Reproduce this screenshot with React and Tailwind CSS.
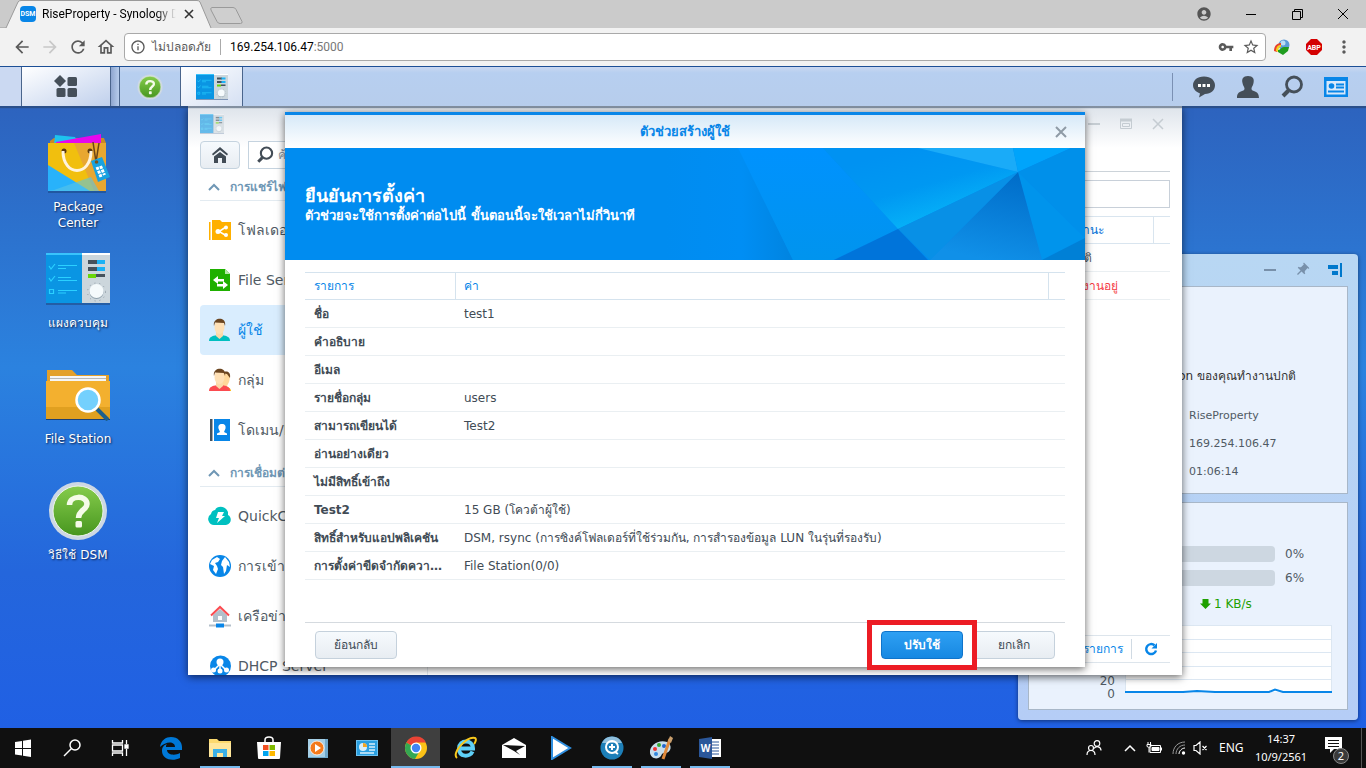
import React from 'react';
import {
  MdArrowBack, MdArrowForward, MdRefresh, MdOutlineHome, MdInfoOutline, MdVpnKey,
  MdStarBorder, MdMoreVert, MdAccountCircle, MdPushPin,
} from 'react-icons/md';

const wizardRows = [
  { name: 'ชื่อ', value: 'test1' },
  { name: 'คำอธิบาย', value: '' },
  { name: 'อีเมล', value: '' },
  { name: 'รายชื่อกลุ่ม', value: 'users' },
  { name: 'สามารถเขียนได้', value: 'Test2' },
  { name: 'อ่านอย่างเดียว', value: '' },
  { name: 'ไม่มีสิทธิ์เข้าถึง', value: '' },
  { name: 'Test2', value: '15 GB (โควต้าผู้ใช้)' },
  { name: 'สิทธิ์สำหรับแอปพลิเคชัน', value: 'DSM, rsync (การซิงค์โฟลเดอร์ที่ใช้ร่วมกัน, การสำรองข้อมูล LUN ในรุ่นที่รองรับ)' },
  { name: 'การตั้งค่าขีดจำกัดความเร็ว', value: 'File Station(0/0)' },
];

/* ---------- DSM icons ---------- */

const ControlPanelIcon = ({ className }) => (
  <svg className={className} viewBox="0 0 64 52" aria-hidden="true">
    <rect width="64" height="51" y="1" fill="#1b3f73" opacity=".5" />
    <rect width="36" height="50" fill="#0a95e3" />
    <rect width="36" height="2" fill="#39c3fb" />
    <rect x="36" width="28" height="50" fill="#ccd6dc" />
    <rect x="36" width="28" height="2" fill="#fff" />
    <g fill="none" stroke="#2ad0ff" strokeWidth="1.2">
      <path d="M3 13l2 3 4-5M12 12.500h19M12 15.500h8M3 25l2 3 4-5M12 24.500h13M12 27.500h19M3.500 36.500h4v4h-4zM12 37.500h19M12 40h8" />
    </g>
    <rect x="42" y="7" width="10" height="4" fill="#46525c" />
    <rect x="51" y="7" width="8" height="4" fill="#1bb2f5" />
    <rect x="42" y="14" width="10" height="4" fill="#46525c" />
    <rect x="51" y="14" width="8" height="4" fill="#1bb2f5" />
    <rect x="50" y="21" width="9" height="3" fill="#46525c" />
    <rect x="42" y="21" width="8" height="4" fill="#6ad60a" />
    <circle cx="50.500" cy="39" r="9" fill="none" stroke="#8e9ba5" strokeDasharray="1 4" />
    <circle cx="50.500" cy="39" r="7" fill="#8fa0ac" />
    <circle cx="50.500" cy="38" r="7" fill="#f5fafc" />
  </svg>
);

const HelpIcon = ({ className }) => (
  <svg className={className} viewBox="0 0 60 60" aria-hidden="true">
    <defs>
      <linearGradient id="help" x2="0" y2="1">
        <stop stopColor="#86cc4c" />
        <stop offset="1" stopColor="#47961f" />
      </linearGradient>
    </defs>
    <circle cx="30" cy="30" r="29" fill="#cdd8e4" />
    <circle cx="30" cy="30" r="25" fill="url(#help)" stroke="#eef5ea" strokeWidth="1" />
    <path d="M21.500 24c0-10 17.500-10 17.500-1 0 6-8.500 6-8.500 14" fill="none" stroke="#f5fbe9" strokeWidth="5.500" />
    <rect x="27.500" y="40" width="6.500" height="6.500" rx="1.500" fill="#f5fbe9" />
  </svg>
);

const PackageIcon = ({ className }) => (
  <svg className={className} viewBox="0 0 64 64" aria-hidden="true">
    <path d="M4 10l4-3h50l2 5v6H4z" fill="#c98a25" />
    <path d="M9 4l20 2 4 8H8z" fill="#1ec3ee" />
    <path d="M10 11L55 3v12H10z" fill="#e607ee" />
    <path d="M2 12h58v48H2z" fill="#f1bf0e" />
    <path d="M28 12h32v48H48z" fill="#e8a731" />
    <path d="M2 34l42 26H2z" fill="#28b2fb" />
    <path d="M8 59l37-13 8 14H2z" fill="#59c4e8" opacity=".6" />
    <path d="M2 61h58" stroke="#174278" />
    <circle cx="18" cy="20" r="2.500" fill="#5b3a10" />
    <circle cx="44" cy="20" r="2.500" fill="#5b3a10" />
    <path d="M17 20c0 26 28 26 28 0" fill="none" stroke="#fff3dc" strokeWidth="3" />
    <path d="M47 11l3 20M53 12l-3 19" stroke="#6b4416" strokeWidth="1.500" fill="none" />
    <path d="M45 30l11-4 8 20-12 5z" fill="#18a2e0" />
    <circle cx="50.500" cy="31" r="1.800" fill="#7d521c" />
    <path d="M51 36l4 10M54.500 35l4 9" stroke="#fff" strokeWidth="3" strokeDasharray="3 1" />
  </svg>
);

const FileStationIcon = ({ className }) => (
  <svg className={className} viewBox="0 0 64 52" aria-hidden="true">
    <path d="M1 14V1h25l5 5h32v10z" fill="#e3a02a" />
    <path d="M4 7h56v7H4z" fill="#f5f5f5" />
    <path d="M4 9.500h56" stroke="#b8b8b8" />
    <path d="M0 12h64v38H0z" fill="#f3b02f" />
    <path d="M0 38h64v12H0z" fill="#e0a020" />
    <path d="M0 50.500h64" stroke="#1b3f73" />
    <path d="M51 40l11 11" stroke="#1d5f8c" strokeWidth="4" />
    <circle cx="42" cy="31" r="11.500" fill="#74d0fd" stroke="#fff" strokeWidth="2.500" />
  </svg>
);

const SearchGlyph = ({ className }) => (
  <svg className={className} viewBox="0 0 24 24" fill="none" stroke="currentColor" aria-hidden="true">
    <circle cx="14" cy="9.500" r="7.500" strokeWidth="2.800" />
    <path d="M8.500 15.500L3 21" strokeWidth="4" />
  </svg>
);

const PersonIcon = ({ shirt, group }) => (
  <svg className="h-6 w-6" viewBox="0 0 24 24" aria-hidden="true">
    {group && <path d="M14 5c8-4 9 4 7 9l-2 4 4 5h-8z" fill="#ffd89a" />}
    {group && <path d="M14 5c5-3 9-1 8 5l-3-4z" fill="#6b4520" />}
    {group && <path d="M17 23c0-4 5-5 6 0z" fill="#fdb400" />}
    <path d="M1 23c0-4 3-5 8-6h5c5 1 8 2 8 6z" fill={shirt} />
    <path d="M8 13h7v5l-3.500 3L8 18z" fill="#fbd9a8" />
    <ellipse cx="11.500" cy="9" rx="5" ry="7" fill="#ffe0b5" />
    <path d="M6 8C4-1 19-2 17 8l-1-3-9-.500z" fill="#6b4520" />
  </svg>
);

const sidebarGroups = [
  {
    title: 'การแชร์ไฟล์',
    items: [
      {
        label: 'โฟลเดอร์ที่ใช้ร่วมกัน',
        icon: (
          <svg className="h-6 w-6" viewBox="0 0 24 24" aria-hidden="true">
            <path d="M1 4h1.500v18H1zM4 2h8l2 2h9v18H4z" fill="#ffb000" />
            <path d="M18 9l-7 4.500 7 4" stroke="#fff" strokeWidth="1.500" fill="none" />
            <circle cx="10" cy="13.500" r="2.500" fill="#fff" />
            <circle cx="18" cy="9.500" r="2" fill="#fff" />
            <circle cx="18" cy="17" r="2" fill="#fff" />
          </svg>
        ),
      },
      {
        label: 'File Services',
        icon: (
          <svg className="h-6 w-6" viewBox="0 0 24 24" aria-hidden="true">
            <path d="M2 1h15l5 5v17H2z" fill="#1fb000" />
            <path d="M17 1v5h5z" fill="#b5e8a8" />
            <path d="M5 12l5-4v3h6v2.500h-6V16zM20 17l-5-4v3H9v2.500h6V21z" fill="#fff" />
          </svg>
        ),
      },
      { label: 'ผู้ใช้', active: true, icon: <PersonIcon shirt="#00bfc0" /> },
      { label: 'กลุ่ม', icon: <PersonIcon shirt="#fb4b50" group /> },
      {
        label: 'โดเมน/LDAP',
        icon: (
          <svg className="h-6 w-6" viewBox="0 0 24 24" aria-hidden="true">
            <path d="M2 1h2.500v22H2z" fill="#46525c" />
            <path d="M6 1h16v22H6z" fill="#0886e8" />
            <path d="M14 6c3 0 4 2 3.500 4.500L16 14l3 1.500V17H9v-1.500l3-1.500-1.500-3.500C10 8 11 6 14 6z" fill="#fff" />
          </svg>
        ),
      },
    ],
  },
  {
    title: 'การเชื่อมต่อ',
    items: [
      {
        label: 'QuickConnect',
        icon: (
          <svg className="h-6 w-6" viewBox="0 0 24 24" aria-hidden="true">
            <path d="M7 21a6 6 0 0 1-4-11 5 5 0 0 1 4-4C9 2 17 1 20 8v3c4 2 4 9-2 10z" fill="#00c0c0" />
            <path d="M10 8h6l-2 4h3l-8 7 2-5H8z" fill="#fff" />
          </svg>
        ),
      },
      {
        label: 'การเข้าถึงจากภายนอก',
        icon: (
          <svg className="h-6 w-6" viewBox="0 0 24 24" aria-hidden="true">
            <circle cx="12" cy="12" r="11" fill="#0886e8" />
            <path d="M4 6l5-3 3 2-2 3-3 1 2 3 1 3-2 5-3-4 1-4-4-2zM14 7l3-4 4 5 1 5-3-2-1 6-2 3-1-7-2-2z" fill="#fff" />
          </svg>
        ),
      },
      {
        label: 'เครือข่าย',
        icon: (
          <svg className="h-6 w-6" viewBox="0 0 24 24" aria-hidden="true">
            <path d="M5 11l7-6 7 6v7H5z" fill="#b2bfca" />
            <path d="M10 12h4v4h-4z" fill="#fff" />
            <path d="M3 11.500L12 3l9 8.500" fill="none" stroke="#fb4b50" strokeWidth="2" />
            <path d="M1 21.500h22" stroke="#b2bfca" strokeWidth="2" />
            <path d="M8 19.500h8v4H8z" fill="#0886e8" />
          </svg>
        ),
      },
      {
        label: 'DHCP Server',
        icon: (
          <svg className="h-6 w-6" viewBox="0 0 24 24" aria-hidden="true">
            <circle cx="12.500" cy="12" r="10.500" fill="#0886e8" />
            <circle cx="12" cy="8" r="3.500" fill="#fff" />
            <path d="M12 9v8M12 10l-6 6M12 10l6 6" stroke="#fff" strokeWidth="1.500" />
            <circle cx="5.500" cy="16" r="2.500" fill="#fff" />
            <circle cx="12" cy="17" r="2.500" fill="#fff" />
            <circle cx="18.500" cy="16" r="2.500" fill="#fff" />
          </svg>
        ),
      },
    ],
  },
];

/* ---------- Browser ---------- */

const BrowserBar = () => (
  <header className="font-[Roboto,'Noto_Sans',sans-serif]">
    <div className="flex h-7 bg-[#cbcbcb]">
      <div className="relative flex h-7 w-[212px] items-center pl-5">
        <svg className="absolute inset-0" width="212" height="28" aria-hidden="true">
          <path d="M0 28h6L18 2q1-1.500 3-1.500h176q2 0 3 1.500l11 26" fill="#f2f2f2" stroke="#9a9a9a" />
        </svg>
        <span className="relative flex h-4 w-4 items-center justify-center rounded-sm bg-[#0886e8] text-[7px] font-bold text-white">DSM</span>
        <span className="relative ml-[6px] w-[134px] overflow-hidden bg-linear-to-r from-black from-85% to-transparent bg-clip-text whitespace-nowrap text-[12px] text-transparent">
          RiseProperty - Synology DiskStation
        </span>
        <button aria-label="Close tab" className="relative ml-2">
          <svg width="10" height="10" viewBox="0 0 10 10" stroke="#333" strokeWidth="1.600" aria-hidden="true"><path d="M1 1l8 8M9 1L1 9" /></svg>
        </button>
      </div>
      <button aria-label="New tab" className="-ml-1">
        <svg width="36" height="28" aria-hidden="true">
          <path d="M4 7.500h21q2 0 3 2l6 12q.500 2-1.500 2H12q-2 0-3-2L3 10q-1-2 1-2.500z" fill="#cfcfcf" stroke="#9a9a9a" />
        </svg>
      </button>
      <div className="ml-auto flex items-center text-black">
        <MdAccountCircle className="mr-4 h-4 w-4 text-[#555]" />
        <button aria-label="Minimize" className="flex w-[46px] justify-center"><svg width="10" height="10" stroke="currentColor" aria-hidden="true"><path d="M0 5.500h10" /></svg></button>
        <button aria-label="Restore" className="flex w-[46px] justify-center"><svg width="11" height="11" fill="none" stroke="currentColor" aria-hidden="true"><path d="M.500 2.500h8v8h-8zM2.500 2.500v-2h8v8h-2" /></svg></button>
        <button aria-label="Close" className="flex w-[46px] justify-center"><svg width="10" height="10" stroke="currentColor" aria-hidden="true"><path d="M0 0l10 10M10 0L0 10" /></svg></button>
      </div>
    </div>
    <div className="flex h-[38px] items-center bg-[#f2f2f2] pr-3 pl-3 text-[#5a5a5a]">
      <button aria-label="Back"><MdArrowBack className="h-5 w-5" /></button>
      <button aria-label="Forward" className="ml-2 text-[#c8c8c8]"><MdArrowForward className="h-5 w-5" /></button>
      <button aria-label="Reload" className="ml-2"><MdRefresh className="h-5 w-5" /></button>
      <button aria-label="Home" className="ml-2"><MdOutlineHome className="h-5 w-5" /></button>
      <div className="ml-2 flex h-7 grow items-center rounded-sm border border-[#a9a9a9] bg-white px-[5px] text-[12px]">
        <MdInfoOutline className="h-4 w-4 shrink-0" />
        <span className="ml-[6px] whitespace-nowrap">ไม่ปลอดภัย</span>
        <span className="mx-[9px] h-4 w-px shrink-0 bg-[#aaa]" />
        <input aria-label="Address" defaultValue="169.254.106.47" className="field-sizing-content text-black outline-none" />
        <span className="text-[#777]">:5000</span>
        <MdVpnKey className="mr-2 ml-auto h-4 w-4" />
        <MdStarBorder className="h-[18px] w-[18px]" />
      </div>
      <svg className="ml-2 h-4 w-4" viewBox="0 0 16 16" aria-hidden="true">
        <circle cx="10" cy="6" r="5.500" fill="#5b9bd8" />
        <circle cx="9" cy="4" r="2.500" fill="#b9dcf5" />
        <path d="M0 12c0-6 4-8 7-8v2c-3 0-4 2-4 7z" fill="#e8402c" />
        <path d="M2 12c0-4 2-6 5-6v2c-2 0-3 2-3 5z" fill="#f7d21c" />
        <path d="M4 11c3 0 3-3 6-3h5l-1 4-5 4-5-3z" fill="#1e9c1e" />
      </svg>
      <svg className="ml-4 h-4 w-4" viewBox="0 0 16 16" aria-hidden="true">
        <path d="M5 0h6l5 5v6l-5 5H5l-5-5V5z" fill="#d40000" />
        <text x="8" y="11" fontSize="7" fontWeight="bold" fill="#fff" textAnchor="middle">ABP</text>
      </svg>
      <button aria-label="Menu" className="ml-3"><MdMoreVert className="h-5 w-5" /></button>
    </div>
  </header>
);

/* ---------- DSM taskbar ---------- */

const DsmBar = () => (
  <nav className="relative z-20 flex h-10 shrink-0 border-t border-[#1c4f96] bg-[linear-gradient(#c9d7f0,#b7cff0_15%,#b7cdec)] text-[#454f59] shadow-[0_2px_1px_rgba(40,60,85,0.5)]">
    <div className="w-[22px] border-r border-[#4a658c] bg-[#cbd9f2]" />
    <button aria-label="Main menu" className="flex w-[89px] items-center justify-center border-r border-[#4a658c] bg-linear-to-br from-white to-[#c0d0ec]">
      <svg className="h-6 w-6" viewBox="0 0 24 24" fill="currentColor" aria-hidden="true">
        <path d="M6 0l6 6-6 6-6-6z" />
        <rect x="13.500" y="2" width="9.500" height="9" rx="1.500" />
        <rect x="2.500" y="13" width="9" height="9" rx="1.500" />
        <rect x="13.500" y="13" width="9.500" height="9" rx="1.500" />
      </svg>
    </button>
    <div className="w-[9px] border-r border-[#4a658c] bg-linear-to-r from-[#8ea6cf] to-[#b7cdec]" />
    <button aria-label="DSM Help" className="flex w-[61px] items-center justify-center border-r border-[#4a658c]">
      <HelpIcon className="h-[26px] w-[26px]" />
    </button>
    <button aria-label="Control Panel" className="flex w-[62px] items-center justify-center border-r border-[#4a658c] bg-linear-to-br from-white to-[#d5e0f3]">
      <ControlPanelIcon className="h-[26px] w-8" />
    </button>
    <div className="ml-auto flex items-center gap-5 pr-[18px]">
      <span className="-mr-px h-7 w-px bg-[#7b90b3]" />
      <button aria-label="Notifications">
        <svg className="h-6 w-6" viewBox="0 0 24 24" aria-hidden="true">
          <path d="M12 1.500c7 0 11 4 11 8.800 0 5-4 8.700-10 8.700L7 22.500l1-4C4 17 1 14 1 10.300 1 5.500 5 1.500 12 1.500z" fill="currentColor" />
          <path d="M6 9h3v3H6zM10.500 9h3v3h-3zM15 9h3v3h-3z" fill="#fff" />
        </svg>
      </button>
      <button aria-label="Personal">
        <svg className="h-6 w-6" viewBox="0 0 24 24" fill="currentColor" aria-hidden="true">
          <path d="M12 1c5 0 6.500 3 5.500 7-.500 3-2 4-2 5.500 0 4 7.500 1 7.500 9.500H1c0-8.500 7.500-5.500 7.500-9.500 0-1.500-1.500-2.500-2-5.500C5.500 4 7 1 12 1z" />
        </svg>
      </button>
      <button aria-label="Search"><SearchGlyph className="h-6 w-6" /></button>
      <button aria-label="Widgets">
        <svg className="h-6 w-6" viewBox="0 0 24 24" aria-hidden="true">
          <path d="M0 2h24v20H0z" fill="#0886e8" />
          <path d="M2.500 6h19v13.500h-19z" fill="#d9e8fa" />
          <circle cx="7.500" cy="11" r="2.800" fill="#0886e8" />
          <path d="M12 9.500h8M12 12.500h8M4 16.500h16" stroke="#0886e8" strokeWidth="1.800" />
        </svg>
      </button>
    </div>
  </nav>
);

/* ---------- Desktop ---------- */

const desktopIcons = [
  { label: 'Package Center', icon: <PackageIcon className="h-16 w-16" /> },
  { label: 'แผงควบคุม', icon: <ControlPanelIcon className="h-[52px] w-16" /> },
  { label: 'File Station', icon: <FileStationIcon className="h-[52px] w-16" /> },
  { label: 'วิธีใช้ DSM', icon: <HelpIcon className="h-[60px] w-[60px]" /> },
];

const DesktopIcons = () => (
  <ul className="flex w-[156px] flex-col pt-[25px]">
    {desktopIcons.map((item) => (
      <li key={item.label} className="h-[116px]">
        <button className="mx-auto flex w-[78px] flex-col items-center text-[12px] leading-4 text-white [text-shadow:1px_1px_2px_#0a1e46]">
          <span className="mb-1 flex h-16 items-center">{item.icon}</span>
          {item.label}
        </button>
      </li>
    ))}
  </ul>
);

const Sidebar = () => (
  <aside className="w-[228px] shrink-0 overflow-hidden border-r border-[#e3e8ec]">
    {sidebarGroups.map((group) => (
      <section key={group.title}>
        <h3 className="mb-1 flex h-8 items-center border-b border-[#e3ebf1] pt-1 pl-2 text-[12px] font-bold whitespace-nowrap text-[#6f97b5]">
          <svg className="mr-[10px]" width="12" height="8" fill="none" stroke="currentColor" strokeWidth="2" aria-hidden="true"><path d="M1 7l5-5 5 5" /></svg>
          {group.title}
        </h3>
        {group.items.map((item) => (
          <a
            key={item.label}
            href="#"
            className={`flex h-[50px] items-center gap-[6px] rounded-sm pl-2 text-[14px] whitespace-nowrap ${
              item.active ? 'bg-[#d9edfe] text-[#0886e8]' : 'text-[#505a64]'
            }`}
          >
            {item.icon}
            {item.label}
          </a>
        ))}
      </section>
    ))}
  </aside>
);

const UserTable = () => (
  <div className="flex grow flex-col pl-5 text-[12px]">
    <div className="h-[3px] border-b border-[#ccd3d9]" />
    <input aria-label="Filter" className="mt-2 h-7 w-full border border-[#c8d0d9] px-2 outline-none" />
    <table className="mt-2 w-full table-fixed border-separate border-spacing-0 text-left whitespace-nowrap">
      <thead>
        <tr className="h-7 text-[#0070d8]">
          <th aria-label="ชื่อ" className="border-y border-[#d9e5ef]" />
          <th className="w-[93px] border-y border-r border-[#d9e5ef] pl-2 font-normal">สถานะ</th>
          <th aria-label="เพิ่มเติม" className="w-4 border-y border-[#d9e5ef]" />
        </tr>
      </thead>
      <tbody>
        <tr className="h-7">
          <td className="border-b border-[#eaeff2]" />
          <td className="border-b border-[#eaeff2] pl-2 text-[#505a64]">ปกติ</td>
          <td className="border-b border-[#eaeff2]" />
        </tr>
        <tr className="h-7">
          <td className="border-b border-[#eaeff2]" />
          <td className="border-b border-[#eaeff2] pl-2 text-[#f53c44]">ใช้งานอยู่</td>
          <td className="border-b border-[#eaeff2]" />
        </tr>
      </tbody>
    </table>
    <div className="mt-auto mb-3 flex h-7 items-center justify-end border-y border-[#dde5ec] pr-3 text-[#0886e8]">
      <span>รายการ</span>
      <span className="mx-2 h-5 w-px bg-[#d0dae3]" />
      <button aria-label="Refresh" className="ml-1">
        <svg width="14" height="14" viewBox="0 0 14 14" aria-hidden="true">
          <path d="M12 8.500A5 5 0 1 1 10.500 3.300" fill="none" stroke="currentColor" strokeWidth="2.500" />
          <path d="M13 1v5.500H7.500z" fill="currentColor" />
        </svg>
      </button>
    </div>
  </div>
);

const Wizard = () => (
  <section role="dialog" aria-labelledby="wizard-title" className="absolute inset-x-0 top-[6px] mx-auto flex h-[555px] w-[800px] flex-col border-t-[3px] border-[#0886e8] bg-white text-[12px] text-[#414b55] shadow-[0_2px_8px_rgba(0,0,0,0.6)]">
    <header className="flex h-[33px] shrink-0 items-center bg-linear-to-b from-[#d6e9f8] to-white px-[18px]">
      <h2 id="wizard-title" className="grow pl-3 text-center text-[13px] font-bold text-[#0886e8]">ตัวช่วยสร้างผู้ใช้</h2>
      <button aria-label="ปิด" className="text-[#8f9ba6]">
        <svg width="12" height="12" viewBox="0 0 12 12" stroke="currentColor" strokeWidth="2" aria-hidden="true"><path d="M1 1l10 10M11 1L1 11" /></svg>
      </button>
    </header>
    <div className="relative flex h-28 shrink-0 flex-col justify-center overflow-hidden bg-[#008cf0] px-5 text-white">
      <svg className="absolute top-0 right-0" width="420" height="112" viewBox="0 0 420 112" aria-hidden="true">
        <defs>
          <linearGradient id="facetA" x1="0" y1="0" x2=".7" y2="1">
            <stop offset=".2" stopColor="#0092f2" />
            <stop offset=".55" stopColor="#0098f2" />
            <stop offset="1" stopColor="#08bcfa" />
          </linearGradient>
          <linearGradient id="facetB" x1=".8" y1="0" x2=".5" y2="1">
            <stop stopColor="#006cc8" />
            <stop offset="1" stopColor="#1090e8" />
          </linearGradient>
          <linearGradient id="facetC" x2="1">
            <stop stopColor="#008cf0" />
            <stop offset=".6" stopColor="#008ef4" />
            <stop offset="1" stopColor="#0084e0" />
          </linearGradient>
          <linearGradient id="facetD" x2="0" y2="1">
            <stop stopColor="#0092fe" />
            <stop offset="1" stopColor="#0094ee" />
          </linearGradient>
        </defs>
        <path d="M0 0h73l55 112H0z" fill="url(#facetC)" />
        <path d="M73 0h85l75 81-65 31h-40z" fill="url(#facetD)" />
        <path d="M158 0h95l100 24-120 57z" fill="url(#facetA)" />
        <path d="M253 0h95l5 24z" fill="#1aabf8" />
        <path d="M348 0h58l-53 24z" fill="#00a4fb" />
        <path d="M406 0h14v90l-67-66z" fill="#0090ea" />
        <path d="M353 24l67 66-43 22z" fill="#0094ec" />
        <path d="M353 24l24 88H265z" fill="url(#facetB)" />
        <path d="M233 81l120-57-88 88z" fill="#0890e6" />
        <path d="M233 81l30 31h-94z" fill="#0074da" />
        <path d="M420 90v22h-43z" fill="#0080d6" />
      </svg>
      <h1 className="relative text-[18px] leading-6 font-bold">ยืนยันการตั้งค่า</h1>
      <p className="relative text-[13px] leading-4 font-bold">ตัวช่วยจะใช้การตั้งค่าต่อไปนี้ ขั้นตอนนี้จะใช้เวลาไม่กี่วินาที</p>
    </div>
    <div className="grow px-5 pt-3">
      <table className="w-full table-fixed border-separate border-spacing-0 text-left">
        <thead>
          <tr className="h-7 text-[#0886e8]">
            <th className="w-[151px] border-y border-r border-[#d5e3ee] px-[9px] font-normal">รายการ</th>
            <th className="border-y border-r border-[#d5e3ee] px-2 font-normal">ค่า</th>
            <th aria-label="เพิ่มเติม" className="w-4 border-y border-[#d5e3ee]" />
          </tr>
        </thead>
        <tbody>
          {wizardRows.map((row) => (
            <tr key={row.name} className="h-7">
              <td className="truncate border-b border-[#eaeff2] px-[9px] font-bold">{row.name}</td>
              <td className="truncate border-b border-[#eaeff2] px-2">{row.value}</td>
              <td className="border-b border-[#eaeff2]" />
            </tr>
          ))}
        </tbody>
      </table>
    </div>
    <footer className="mx-5 flex h-[45px] shrink-0 items-start border-t border-[#d5dadf] px-[10px] pt-2">
      <button className="h-7 w-[82px] rounded-sm border border-[#c5d1dc] bg-linear-to-b from-[#f6fafd] to-[#e8edf2]">ย้อนกลับ</button>
      <div className="relative ml-auto">
        <button className="block h-7 w-[82px] rounded-sm border border-[#0f74cb] bg-linear-to-b from-[#2ea0f3] to-[#1688e2] font-bold text-white">ปรับใช้</button>
        <div className="pointer-events-none absolute -inset-x-[14px] -inset-y-[11px] border-[5px] border-[#ec1c24]" />
      </div>
      <button className="ml-[10px] h-7 w-[82px] rounded-sm border border-[#c5d1dc] bg-linear-to-b from-[#f6fafd] to-[#e8edf2]">ยกเลิก</button>
    </footer>
  </section>
);

const ControlPanelWindow = () => (
  <main className="absolute top-0 left-[188px] z-10 flex h-[569px] w-[994px] flex-col bg-[linear-gradient(#dde3ea,#fff_42px)] shadow-[0_2px_8px_rgba(0,0,0,0.6)]">
    <div className="flex h-[35px] shrink-0 items-center px-3">
      <ControlPanelIcon className="h-5 w-6 opacity-60" />
      <div className="ml-auto flex items-center gap-5 pr-[6px] text-[#c5ccd2]">
        <svg width="12" height="12" stroke="currentColor" strokeWidth="2" aria-hidden="true"><path d="M0 6h12" /></svg>
        <svg width="12" height="12" fill="none" stroke="currentColor" aria-hidden="true"><path d="M0 2h12" strokeWidth="3" /><path d="M.500 2v8.500h11V2M2.500 5.500h7v3h-7z" /></svg>
        <svg width="12" height="12" stroke="currentColor" strokeWidth="1.500" aria-hidden="true"><path d="M1 1l10 10M11 1L1 11" /></svg>
      </div>
    </div>
    <div className="flex h-7 shrink-0 gap-2 pl-3">
      <button aria-label="หน้าหลัก" className="flex w-10 items-center justify-center rounded-sm border border-[#c5d3df] bg-linear-to-b from-[#f6fafd] to-[#e8edf2]">
        <svg width="18" height="18" viewBox="0 0 18 18" fill="#414b55" aria-hidden="true">
          <path d="M9 1l8 7-1 1.500L9 4 2 9.500 1 8z" />
          <path d="M3 10.500L9 6l6 4.500V17h-4v-5H7v5H3z" />
        </svg>
      </button>
      <label className="flex w-[172px] items-center border border-[#c5d3df] bg-white pl-[7px] text-[#414b55]">
        <SearchGlyph className="h-[18px] w-[18px]" />
        <input placeholder="ค้นหา" aria-label="ค้นหา" className="ml-1 w-[120px] text-[12px] outline-none placeholder:text-[#8c96a0]" />
      </label>
    </div>
    <div className="flex min-h-0 grow pr-3 pl-3">
      <Sidebar />
      <UserTable />
    </div>
    <Wizard />
  </main>
);

const trafficLines = [14, 27, 41, 54];

const Widgets = () => (
  <aside className="absolute right-2 bottom-2 flex w-[340px] flex-col rounded-sm bg-linear-to-b from-[#b8d7f3] to-[#b5cdf6] px-[10px] pb-[10px] text-[11px] text-[#505a64] shadow-[0_1px_4px_rgba(0,0,0,0.5)]">
    <div className="flex h-8 items-center justify-end gap-[18px] pr-[6px] text-[#7890aa]">
      <svg width="12" height="12" stroke="currentColor" strokeWidth="2" aria-hidden="true"><path d="M0 6h12" /></svg>
      <MdPushPin className="h-4 w-4 rotate-45" />
      <svg width="14" height="14" fill="#0078cc" aria-hidden="true"><path d="M0 2h10v4H0zM4 8h6v4H4zM12 0h2v14h-2z" /></svg>
    </div>
    <section className="mb-2 flex h-[208px] flex-col border border-[#a8b7c8] bg-[#eaf2fd]">
      <p className="mt-[77px] pr-[51px] text-right text-[12px] leading-6 text-[#333]">Synology DiskStation ของคุณทำงานปกติ</p>
      <dl className="mt-[14px] grid grid-cols-[160px_1fr] leading-7">
        <dt className="pl-3">ชื่อเซิร์ฟเวอร์</dt><dd>RiseProperty</dd>
        <dt className="pl-3">LAN 1</dt><dd>169.254.106.47</dd>
        <dt className="pl-3">เวลาทำงาน</dt><dd>01:06:14</dd>
      </dl>
    </section>
    <section className="h-[208px] border border-[#a8b7c8] bg-[#eaf2fd] pt-[43px] text-[12px]">
      <div className="mb-2 flex h-4 items-center pl-3"><span className="w-20">CPU</span><span className="mr-[10px] h-4 w-[154px] rounded-sm bg-[#cdd7e1]" />0%</div>
      <div className="flex h-4 items-center pl-3"><span className="w-20">RAM</span><span className="mr-[10px] h-4 w-[154px] rounded-sm bg-[#cdd7e1]"><span className="block h-4 w-[9px] rounded-l-sm bg-[#0886e8]" /></span>6%</div>
      <div className="mt-[10px] flex h-4 items-center pl-[171px] text-[#1ea000]">
        <svg className="mr-[3px]" width="11" height="10" fill="currentColor" aria-hidden="true"><path d="M2.500 0h6v4.500H11L5.500 10 0 4.500h2.500z" /></svg>
        1 KB/s
      </div>
      <div className="mt-[13px] flex pr-[15px]">
        <div className="flex grow flex-col items-end justify-end pr-[10px] leading-[13px]"><span>20</span><span>0</span></div>
        <svg width="207" height="76" aria-hidden="true">
          <path d="M0 0h207v67H0z" fill="#fff" />
          <g stroke="#dce7f2">
            <path d="M.500 0v67M206.500 0v67M0 .500h207" />
            {trafficLines.map((y) => <path key={y} d={`M0 ${y}.500h207`} />)}
          </g>
          <path d="M0 67h58l14-1 18 1h54l6-2.500 8 2.500h49" fill="none" stroke="#0886e8" strokeWidth="2" />
        </svg>
      </div>
    </section>
  </aside>
);

/* ---------- Windows taskbar ---------- */

const appIcons = [
  {
    name: 'Start',
    icon: <path d="M0 3l7-1v7H0zM8 1.800L16 .500V9H8zM0 10h7v6.500l-7-1zM8 10h8v8l-8-1.200z" fill="#fff" />,
    box: '-3 -3 24 24',
  },
  {
    name: 'Search',
    icon: <g fill="none" stroke="#fff" strokeWidth="1.500"><circle cx="14" cy="9" r="5" /><path d="M10.500 12.500L3 20" /></g>,
  },
  {
    name: 'Task View',
    icon: <g fill="none" stroke="#fff" strokeWidth="1.300"><path d="M2.500 4v3h10V4M2.500 20v-3h10v3M2.500 9h10v6h-10zM16.500 4v4M16.500 13v7" /><path d="M15 9h3v3h-3z" fill="#fff" /></g>,
  },
  {
    name: 'Edge',
    icon: <path d="M1 11C2 4 7 1 12 1c7 0 11 5 11 10v3H8c0 5 8 6 13 3v5c-8 4-18 1-18-7 0-4 2-6 5-7-1 1-1 2-1 3h9c0-6-9-6-15 0z" fill="#0078d7" />,
  },
  {
    name: 'File Explorer',
    open: true,
    icon: <g><path d="M1 3h8l2 2h12v16H1z" fill="#fbd96e" /><path d="M1 7h22v14H1z" fill="#ffe79b" /><path d="M5 21v-8h14v8h-4v-4H9v4z" fill="#3bb1e8" /></g>,
  },
  {
    name: 'Store',
    icon: <g><path d="M8 7V4c0-4 8-4 8 0v3" fill="none" stroke="#fff" strokeWidth="1.500" /><path d="M0 6h24l-1 16q0 1-1 1H2q-1 0-1-1z" fill="#fff" /><path d="M6 9h5.500v5H6z" fill="#f25022" /><path d="M12.500 9H18v5h-5.500z" fill="#7fba00" /><path d="M6 15h5.500v5H6z" fill="#00a4ef" /><path d="M12.500 15H18v5h-5.500z" fill="#ffb900" /></g>,
  },
  {
    name: 'Media Player',
    icon: <g><path d="M2 3h20v19H2z" fill="#6fa9cc" /><path d="M2 3h17v18H2z" fill="#a5cfe6" /><circle cx="11" cy="12" r="7" fill="#f37a1c" stroke="#fff" strokeWidth=".8" /><path d="M9 8l6 4-6 4z" fill="#fff" /></g>,
  },
  {
    name: 'Control Panel',
    icon: <g><path d="M1 4h22v16H1z" fill="#6cc2f0" /><path d="M2 5h20v14H2z" fill="#2a9fe0" /><circle cx="8" cy="11" r="4" fill="#d9f0fb" /><path d="M8 11V7a4 4 0 0 1 4 4z" fill="#f5a623" /><path d="M14 8h6M14 11h6M14 14h6M5 17h14" stroke="#d9f0fb" strokeWidth="1.500" /></g>,
  },
  {
    name: 'Chrome',
    open: true,
    active: true,
    icon: <g><circle cx="12" cy="12" r="11" fill="#fbc116" /><path d="M12 12L2.500 6.500A11 11 0 0 0 11 23l5-8.700z" fill="#34a853" /><path d="M12 12L2.500 6.500a11 11 0 0 1 19.500 0H12z" fill="#ea4335" /><circle cx="12" cy="12" r="5.500" fill="#fff" /><circle cx="12" cy="12" r="4.200" fill="#4285f4" /></g>,
  },
  {
    name: 'Internet Explorer',
    icon: <g fill="none"><path d="M6 12.500h14C20 3 6 3 6 12.500c0 9 11 9 13.500 3" stroke="#5fd0f7" strokeWidth="4" /><path d="M4 22C-2 17 14 0 22 2c2 1 0 5-1 6" stroke="#f8c81c" strokeWidth="2" /></g>,
  },
  {
    name: 'Mail',
    icon: <g><path d="M0 9l12-7 12 7v13H0z" fill="#fff" /><path d="M1 9l22 1-9 5 4 4-6-4z" fill="#111" /></g>,
  },
  {
    name: 'Player',
    icon: <path d="M1 1l18 11L1 23z" fill="#fff" stroke="#2f8fe0" strokeWidth="2" />,
  },
  {
    name: 'Assistant',
    open: true,
    icon: <g><circle cx="12" cy="12" r="11.500" fill="#1d7fb8" /><path d="M2 7a11 11 0 0 1 20 0z" fill="#8fbfdd" /><g fill="none" stroke="#fff" strokeWidth="2"><circle cx="12" cy="11" r="6" /><path d="M12 8v6M9 11h6M15 16l3 2" /></g></g>,
  },
  {
    name: 'Paint',
    open: true,
    icon: <g><path d="M1 17C0 9 10 3 18 6c6 3 4 11-2 11-3 0-3 1-4 3-3 4-10 3-11-3z" fill="#c8deec" /><circle cx="6" cy="13" r="2" fill="#e33" /><circle cx="10" cy="9" r="2" fill="#3a3" /><circle cx="7" cy="18" r="2" fill="#38d" /><circle cx="15" cy="10" r="2" fill="#26c" /><path d="M21 3l-7 20" stroke="#e08a3c" strokeWidth="3" /><path d="M19 5l2-5 3 2-2 5z" fill="#caa06e" /></g>,
  },
  {
    name: 'Word',
    open: true,
    icon: <g><path d="M13 3h10v18H13z" fill="#fff" /><path d="M14 6h7M14 9h7M14 12h7M14 15h7M14 18h7" stroke="#2b579a" /><path d="M1 3l13-2v22L1 21z" fill="#2b579a" /><text x="7.500" y="16" fontSize="10" fontWeight="bold" fill="#fff" textAnchor="middle">W</text></g>,
  },
];

const Taskbar = () => (
  <footer className="flex h-10 shrink-0 items-stretch bg-[#101010] font-['Noto_Sans',sans-serif] text-[12px] text-white">
    {appIcons.map((app, i) => (
      <button
        key={app.name}
        aria-label={app.name}
        className={`flex flex-col items-center pt-2 ${i === 0 ? 'w-12' : 'w-[49px]'} ${app.active ? 'bg-[#3f3f3f]' : ''}`}
      >
        <svg className="h-6 w-6" viewBox={app.box || '0 0 24 24'} aria-hidden="true">{app.icon}</svg>
        {app.open && <span className={`mt-auto h-[2px] bg-[#76b9ed] ${app.active ? 'w-full' : 'w-10'}`} />}
      </button>
    ))}
    <div className="ml-auto flex items-center">
      <svg width="16" height="16" viewBox="0 0 16 16" fill="none" stroke="#fff" strokeWidth="1.200" aria-hidden="true">
        <circle cx="11" cy="3.500" r="2.800" /><path d="M8 8.500c2-3 7-2 7 2M1 15c0-6 8-6 8 0" /><circle cx="5" cy="8" r="2.500" />
      </svg>
      <svg className="ml-[22px]" width="12" height="8" fill="none" stroke="#fff" strokeWidth="1.500" aria-hidden="true"><path d="M1 7l5-5 5 5" /></svg>
      <svg className="ml-[10px]" width="16" height="14" viewBox="0 0 16 14" fill="none" stroke="#fff" aria-hidden="true"><path d="M4 4.500h10.500v7H4zM1 3.500h4v2l-2 1-2-1zM2 1v2M4.500 1v2M3 7v4.500" /><path d="M6 6.500h7v3H6zM15.500 6.500v3" fill="#fff" /></svg>
      <svg className="ml-[10px]" width="14" height="14" viewBox="0 0 14 14" fill="none" aria-hidden="true"><path d="M1 13C1 6 6 1 13 1M4 13c0-5 4-9 9-9" stroke="#999" /><path d="M7 13c0-3 3-6 6-6" stroke="#fff" /><circle cx="11.500" cy="12" r="1.700" fill="#fff" /></svg>
      <svg className="ml-[7px]" width="15" height="14" viewBox="0 0 15 14" fill="none" stroke="#fff" aria-hidden="true"><path d="M1 4.500h2l4-3.500v12L3 9.500H1zM9.500 5l4 4M13.500 5l-4 4" strokeWidth="1.200" /></svg>
      <span className="ml-[11px] w-6">ENG</span>
      <time className="ml-2 w-[60px] text-center text-[11px] leading-[18px]">14:37<br />10/9/2561</time>
      <button aria-label="Action Center" className="relative mr-3 ml-[14px] h-8 w-6">
        <svg className="mb-2" width="17" height="18" aria-hidden="true"><path d="M0 2h17v12h-8l-4 4v-4H0z" fill="#fff" /><path d="M3 5.500h11M3 8.500h11M3 11.500h11" stroke="#101010" /></svg>
        <span className="absolute right-0 bottom-0 flex h-4 w-4 items-center justify-center rounded-full border border-[#888] bg-[#3a3a3a] text-[11px]">2</span>
      </button>
    </div>
    <span className="mr-1 w-px bg-[#555]" />
  </footer>
);

const App = () => (
  <div className="flex min-h-screen flex-col overflow-hidden font-['DejaVu_Sans','Noto_Sans',sans-serif]">
    <BrowserBar />
    <DsmBar />
    <div className="relative grow bg-[linear-gradient(#2d63be,#2b82df_42%,#2466dc_75%,#2060e4)]">
      <DesktopIcons />
      <ControlPanelWindow />
      <Widgets />
    </div>
    <Taskbar />
  </div>
);

export default App;
